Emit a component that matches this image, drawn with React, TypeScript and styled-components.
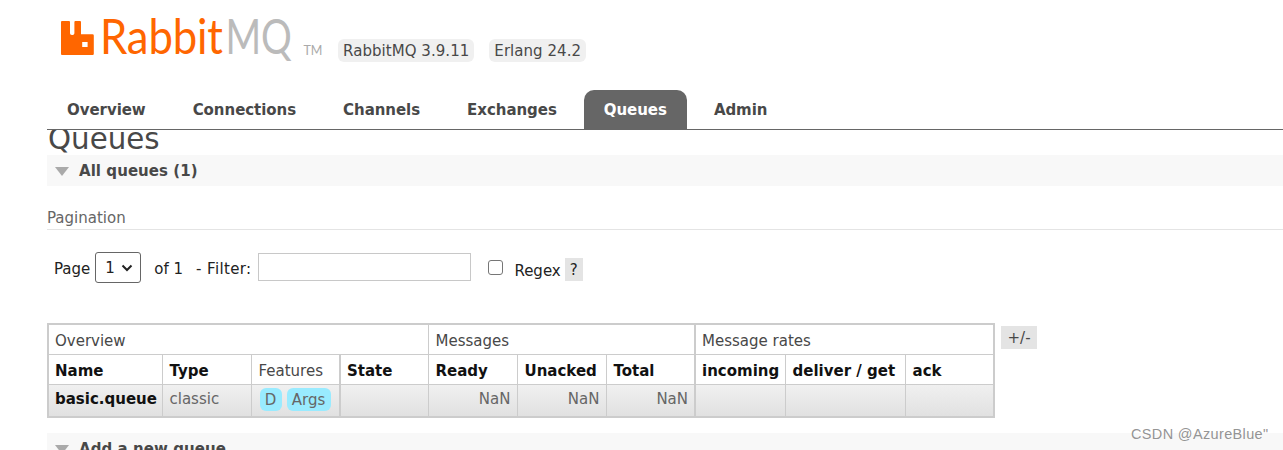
import React from "react"
import styled, { createGlobalStyle } from "styled-components"

const Global = createGlobalStyle`
  html, body {
    margin: 0;
    padding: 0;
    height: 450px;
    overflow: hidden;
    background: #fff;
    font-family: "DejaVu Sans", Verdana, sans-serif;
    font-size: 15px;
    color: #484848;
  }
`

const Page = styled.div`
  width: 1283px;
  height: 450px;
  overflow: hidden;
  position: relative;
`

const Header = styled.header`
  height: 90px;
  padding-left: 61px;
  display: flex;
  align-items: flex-start;
`

const Logo = styled.div`
  display: flex;
  align-items: flex-start;
  width: 277px;
  padding-top: 21px;
`

const Wordmark = styled.span`
  font-family: "Lato", "Open Sans", sans-serif;
  font-weight: 400;
  font-size: 48px;
  line-height: 34px;
  margin: -2px 0 0 6px;
  letter-spacing: -0.2px;
  color: #ff6600;
  white-space: nowrap;
  transform: scaleX(0.91);
  transform-origin: left center;
`

const WordmarkGrey = styled.span`
  display: inline-block;
  margin-left: 3px;
  color: #bbbbbb;
  transform: scaleX(0.88);
  transform-origin: left center;
`

const Trademark = styled.span`
  font-family: "Lato", sans-serif;
  font-size: 12.5px;
  color: #aaa;
  margin: 22px 0 0 -17px;
`

const Versions = styled.div`
  display: flex;
  gap: 15px;
  padding-top: 39px;
`

const Version = styled.span`
  background: #f0f0f0;
  border-radius: 6px;
  height: 23px;
  line-height: 24px;
  padding: 0 5px;
  letter-spacing: 0.05px;
`

const Nav = styled.nav`
  position: relative;
  z-index: 1;
  background: #fff;
  margin-left: 47px;
  height: 39px;
  border-bottom: 1px solid #666;
  display: flex;
  gap: 7px;
  letter-spacing: -0.05px;
`

const Tab = styled.a<{ $active?: boolean }>`
  padding: 0 20px;
  line-height: 40px;
  font-weight: bold;
  border-radius: 10px 10px 0 0;
  color: ${p => (p.$active ? "#fff" : "#484848")};
  background: ${p => (p.$active ? "#666" : "transparent")};
`

const Main = styled.main`
  margin-left: 47px;
`

const Title = styled.h1`
  margin: -7px 0 0;
  height: 32px;
  font-size: 29.3px;
  line-height: 32px;
  font-weight: normal;
  color: #484848;
  padding-left: 1px;
`

const SectionBar = styled.div`
  height: 31px;
  background: #f8f8f8;
  display: flex;
  align-items: center;
  padding-left: 8px;
  gap: 10px;
  font-weight: bold;
  letter-spacing: 0.06px;
`

const Triangle = styled.span`
  width: 0;
  height: 0;
  margin-top: 2px;
  border-left: 7px solid transparent;
  border-right: 7px solid transparent;
  border-top: 9px solid #aaa;
`

const Pagination = styled.div`
  margin-top: 23px;
  height: 20px;
  line-height: 19px;
  font-size: 15px;
  color: #666;
  border-bottom: 1px solid #e4e4e4;
`

const FilterRow = styled.div`
  display: flex;
  align-items: center;
  height: 31px;
  margin-top: 22px;
  padding-left: 7px;
  font-size: 15px;
  color: #222;
`

const FilterText = styled.span<{ $gap?: number; $wide?: boolean }>`
  margin-left: ${p => p.$gap ?? 0}px;
  padding-top: 2px;
  letter-spacing: ${p => (p.$wide ? "0.35px" : "0")};
`

const PageSelect = styled.span`
  box-sizing: border-box;
  width: 46px;
  height: 31px;
  margin-left: 5px;
  border: 1px solid #666;
  border-radius: 3px;
  display: flex;
  align-items: center;
  justify-content: space-between;
  padding: 0 7px 0 9px;
  font-size: 15px;
`

const FilterInput = styled.input`
  box-sizing: border-box;
  width: 213px;
  height: 28px;
  margin: -2px 0 0 7px;
  border: 1px solid #c8c8c8;
  outline: none;
`

const Check = styled.input`
  appearance: none;
  box-sizing: border-box;
  width: 15px;
  height: 15px;
  margin: 0 0 0 17px;
  border: 1px solid #767676;
  border-radius: 3px;
  background: #fff;
`

const RegexLabel = styled.span`
  margin-left: 11px;
  padding-top: 6px;
`

const Help = styled.span`
  width: 18px;
  height: 23px;
  margin: 3px 0 0 4px;
  background: #e4e4e4;
  text-align: center;
  line-height: 24px;
`

const TableRow = styled.div`
  display: flex;
  align-items: flex-start;
  margin-top: 40px;
  gap: 6px;
`

const Table = styled.table`
  border-collapse: collapse;
  table-layout: fixed;
  width: 946px;
  border: 2px solid #ccc;
  font-size: 15px;

  th:first-child,
  td:first-child {
    padding-left: 6px;
  }
`

const GroupCell = styled.th<{ $sep?: boolean }>`
  height: 27px;
  padding: 2px 6px 0 ${p => (p.$sep ? 6 : 7)}px;
  text-align: left;
  font-weight: normal;
  color: #484848;
  border: 1px solid #ccc;
  border-left-width: ${p => (p.$sep ? 2 : 1)}px;
`

const HeadCell = styled.th<{ $sep?: boolean; $plain?: boolean }>`
  height: 27px;
  padding: 2px 6px 0 ${p => (p.$sep ? 6 : 7)}px;
  text-align: left;
  font-weight: ${p => (p.$plain ? "normal" : "bold")};
  color: ${p => (p.$plain ? "#484848" : "#111")};
  border: 1px solid #ccc;
  border-left-width: ${p => (p.$sep ? 2 : 1)}px;
  white-space: nowrap;
`

const DataRow = styled.tr`
  background: linear-gradient(#f0f0f0, #e0e0e0);
`

const DataCell = styled.td<{ $sep?: boolean; $num?: boolean; $strong?: boolean }>`
  height: 31px;
  padding: 0 6px 0 7px;
  vertical-align: top;
  line-height: 28px;
  text-align: ${p => (p.$num ? "right" : "left")};
  font-weight: ${p => (p.$strong ? "bold" : "normal")};
  color: ${p => (p.$strong ? "#111" : "#666")};
  border: 1px solid #ccc;
  border-left-width: ${p => (p.$sep ? 2 : 1)}px;
  white-space: nowrap;
`

const FeatureList = styled.div`
  display: flex;
  gap: 5px;
  padding: 3px 0 0 1px;
  margin-right: -6px;
`

const Feature = styled.span`
  background: #99ebff;
  border-radius: 6px;
  height: 23px;
  line-height: 24px;
  padding: 0 5.25px;
  color: #666;
`

const ToggleColumns = styled.span`
  width: 36px;
  height: 23px;
  margin-top: 3px;
  background: #e4e4e4;
  text-align: center;
  line-height: 24px;
`

const BottomBar = styled(SectionBar)`
  margin-top: 15px;
`

const Watermark = styled.span`
  position: absolute;
  left: 1131px;
  top: 426px;
  font-family: "Liberation Sans", Arial, sans-serif;
  font-size: 14.5px;
  letter-spacing: 0.35px;
  color: rgba(120, 120, 120, 0.8);
`

const RabbitMark = () => (
  <svg width="33" height="34" viewBox="0 0 33 34">
    <path
      fill="#ff6600"
      fillRule="evenodd"
      d="M1 0H8Q9 0 9 1V12.2Q9 14 10.8 14H11.6Q13.4 14 13.4 12.2V1Q13.4 0 14.4 0H19Q20 0 20 1V13.2H31.5Q32.8 13.2 32.8 14.5V33Q32.8 34 31.5 34H1Q0 34 0 33V1Q0 0 1 0ZM21.2 21V26H26.6V21Z"
    />
  </svg>
)

const Chevron = () => (
  <svg width="12" height="8" viewBox="0 0 12 8">
    <path d="M1.5 1.5L6 6L10.5 1.5" fill="none" stroke="#222" strokeWidth="2" />
  </svg>
)

const colWidths = [114, 89, 89, 88, 89, 89, 89, 90, 120, 89]

export default function App() {
  return (
    <Page>
      <Global />
      <Header>
        <Logo>
          <RabbitMark />
          <Wordmark>
            Rabbit<WordmarkGrey>MQ</WordmarkGrey>
          </Wordmark>
          <Trademark>TM</Trademark>
        </Logo>
        <Versions>
          <Version>RabbitMQ 3.9.11</Version>
          <Version>Erlang 24.2</Version>
        </Versions>
      </Header>
      <Nav>
        <Tab>Overview</Tab>
        <Tab>Connections</Tab>
        <Tab>Channels</Tab>
        <Tab>Exchanges</Tab>
        <Tab $active>Queues</Tab>
        <Tab>Admin</Tab>
      </Nav>
      <Main>
        <Title>Queues</Title>
        <SectionBar>
          <Triangle />
          All queues (1)
        </SectionBar>
        <Pagination>Pagination</Pagination>
        <FilterRow>
          <FilterText>Page</FilterText>
          <PageSelect>
            1 <Chevron />
          </PageSelect>
          <FilterText $gap={13}>of 1</FilterText>
          <FilterText $gap={13} $wide>- Filter:</FilterText>
          <FilterInput type="text" />
          <Check type="checkbox" />
          <RegexLabel>Regex</RegexLabel>
          <Help>?</Help>
        </FilterRow>
        <TableRow>
          <Table>
            <colgroup>
              {colWidths.map((w, i) => (
                <col key={i} style={{ width: w }} />
              ))}
            </colgroup>
            <thead>
              <tr>
                <GroupCell colSpan={4}>Overview</GroupCell>
                <GroupCell colSpan={3}>Messages</GroupCell>
                <GroupCell colSpan={3} $sep>Message rates</GroupCell>
              </tr>
              <tr>
                <HeadCell>Name</HeadCell>
                <HeadCell>Type</HeadCell>
                <HeadCell $plain>Features</HeadCell>
                <HeadCell $sep>State</HeadCell>
                <HeadCell>Ready</HeadCell>
                <HeadCell>Unacked</HeadCell>
                <HeadCell>Total</HeadCell>
                <HeadCell $sep>incoming</HeadCell>
                <HeadCell>deliver / get</HeadCell>
                <HeadCell>ack</HeadCell>
              </tr>
            </thead>
            <tbody>
              <DataRow>
                <DataCell $strong>basic.queue</DataCell>
                <DataCell>classic</DataCell>
                <DataCell>
                  <FeatureList>
                    <Feature>D</Feature>
                    <Feature>Args</Feature>
                  </FeatureList>
                </DataCell>
                <DataCell $sep />
                <DataCell $num>NaN</DataCell>
                <DataCell $num>NaN</DataCell>
                <DataCell $num>NaN</DataCell>
                <DataCell $sep />
                <DataCell />
                <DataCell />
              </DataRow>
            </tbody>
          </Table>
          <ToggleColumns>+/-</ToggleColumns>
        </TableRow>
        <BottomBar>
          <Triangle />
          Add a new queue
        </BottomBar>
      </Main>
      <Watermark>CSDN @AzureBlue"</Watermark>
    </Page>
  )
}
